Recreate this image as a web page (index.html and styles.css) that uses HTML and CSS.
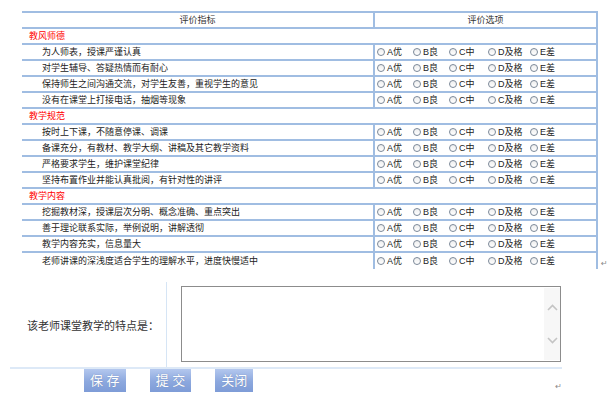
FILE: index.html
```html
<!DOCTYPE html>
<html lang="zh-CN">
<head>
  <meta charset="UTF-8">
  <title>课堂教学评价</title>
  <link rel="stylesheet" href="styles.css">
</head>
<body>
  <div class="grid-wrap">
    <table class="eval">
      <colgroup><col class="c-item"><col class="c-opt"></colgroup>
      <tr class="head"><th>评价指标</th><th class="opt">评价选项</th></tr>

      <tr class="sec"><td colspan="2">教风师德</td></tr>
      <tr><td class="item">为人师表，授课严谨认真</td><td class="opt"><div class="opts"><label><span class="radio"></span>A优</label><label><span class="radio"></span>B良</label><label><span class="radio"></span>C中</label><label><span class="radio"></span>D及格</label><label><span class="radio"></span>E差</label></div></td></tr>
      <tr><td class="item">对学生辅导、答疑热情而有耐心</td><td class="opt"><div class="opts"><label><span class="radio"></span>A优</label><label><span class="radio"></span>B良</label><label><span class="radio"></span>C中</label><label><span class="radio"></span>D及格</label><label><span class="radio"></span>E差</label></div></td></tr>
      <tr><td class="item">保持师生之间沟通交流，对学生友善，重视学生的意见</td><td class="opt"><div class="opts"><label><span class="radio"></span>A优</label><label><span class="radio"></span>B良</label><label><span class="radio"></span>C中</label><label><span class="radio"></span>D及格</label><label><span class="radio"></span>E差</label></div></td></tr>
      <tr><td class="item">没有在课堂上打接电话，抽烟等现象</td><td class="opt"><div class="opts"><label><span class="radio"></span>A优</label><label><span class="radio"></span>B良</label><label><span class="radio"></span>C中</label><label><span class="radio"></span>C及格</label><label><span class="radio"></span>E差</label></div></td></tr>

      <tr class="sec"><td colspan="2">教学规范</td></tr>
      <tr><td class="item">按时上下课，不随意停课、调课</td><td class="opt"><div class="opts"><label><span class="radio"></span>A优</label><label><span class="radio"></span>B良</label><label><span class="radio"></span>C中</label><label><span class="radio"></span>D及格</label><label><span class="radio"></span>E差</label></div></td></tr>
      <tr><td class="item">备课充分，有教材、教学大纲、讲稿及其它教学资料</td><td class="opt"><div class="opts"><label><span class="radio"></span>A优</label><label><span class="radio"></span>B良</label><label><span class="radio"></span>C中</label><label><span class="radio"></span>D及格</label><label><span class="radio"></span>E差</label></div></td></tr>
      <tr><td class="item">严格要求学生，维护课堂纪律</td><td class="opt"><div class="opts"><label><span class="radio"></span>A优</label><label><span class="radio"></span>B良</label><label><span class="radio"></span>C中</label><label><span class="radio"></span>D及格</label><label><span class="radio"></span>E差</label></div></td></tr>
      <tr><td class="item">坚持布置作业并能认真批阅，有针对性的讲评</td><td class="opt"><div class="opts"><label><span class="radio"></span>A优</label><label><span class="radio"></span>B良</label><label><span class="radio"></span>C中</label><label><span class="radio"></span>D及格</label><label><span class="radio"></span>E差</label></div></td></tr>

      <tr class="sec"><td colspan="2">教学内容</td></tr>
      <tr><td class="item">挖掘教材深，授课层次分明、概念准确、重点突出</td><td class="opt"><div class="opts"><label><span class="radio"></span>A优</label><label><span class="radio"></span>B良</label><label><span class="radio"></span>C中</label><label><span class="radio"></span>D及格</label><label><span class="radio"></span>E差</label></div></td></tr>
      <tr><td class="item">善于理论联系实际，举例说明，讲解透彻</td><td class="opt"><div class="opts"><label><span class="radio"></span>A优</label><label><span class="radio"></span>B良</label><label><span class="radio"></span>C中</label><label><span class="radio"></span>D及格</label><label><span class="radio"></span>E差</label></div></td></tr>
      <tr><td class="item">教学内容充实，信息量大</td><td class="opt"><div class="opts"><label><span class="radio"></span>A优</label><label><span class="radio"></span>B良</label><label><span class="radio"></span>C中</label><label><span class="radio"></span>D及格</label><label><span class="radio"></span>E差</label></div></td></tr>
      <tr class="last"><td class="item">老师讲课的深浅度适合学生的理解水平，进度快慢适中</td><td class="opt"><div class="opts"><label><span class="radio"></span>A优</label><label><span class="radio"></span>B良</label><label><span class="radio"></span>C中</label><label><span class="radio"></span>D及格</label><label><span class="radio"></span>E差</label></div></td></tr>
    </table>
    <span class="mark">↵</span>
  </div>

  <!-- 评语 -->
  <div class="remark">
    <div class="remark-label">该老师课堂教学的特点是：</div>
    <div class="remark-field">
      <div class="textbox">
        <div class="textbox-body"></div>
        <div class="scroll">
          <svg width="11" height="7" viewBox="0 0 11 7"><path d="M1 6 L5.5 1.5 L10 6" fill="none" stroke="#c4c4c4" stroke-width="1.6"/></svg>
          <svg width="11" height="7" viewBox="0 0 11 7"><path d="M1 1 L5.5 5.5 L10 1" fill="none" stroke="#c4c4c4" stroke-width="1.6"/></svg>
        </div>
      </div>
    </div>
  </div>

  <div class="actions">
    <button class="btn">保 存</button>
    <button class="btn">提 交</button>
    <button class="btn">关闭</button>
    <span class="mark end">↵</span>
  </div>
</body>
</html>
```

FILE: styles.css
```css
* { box-sizing: border-box; }
body {
  margin: 0;
  font-family: "Liberation Sans", "Noto Sans CJK SC", sans-serif;
  color: #222;
  background: #fff;
}
.grid-wrap {
  display: flex;
  align-items: flex-end;
  margin: 11px 0 0 22px;
}
.eval {
  border-collapse: separate;
  border-spacing: 0;
  table-layout: fixed;
  width: 576px;
  font-size: 9px;
}
.c-item { width: 351px; }
.eval th,
.eval td {
  padding: 0;
  line-height: 14px;
  font-weight: normal;
  border-top: 2px solid #a0bde2;
  white-space: nowrap;
  text-align: left;
}
.eval th { text-align: center; color: #333; }
.eval .opt {
  border-left: 2px solid #a0bde2;
  border-right: 2px solid #a0bde2;
  padding-left: 2px;
}
.eval th.opt { padding-left: 0; }
.eval .sec td {
  color: #f00;
  padding-left: 7px;
  border-right: 2px solid #a0bde2;
}
.eval .item { padding-left: 20px; }
.eval .last td { line-height: 16px; }
.opts {
  display: grid;
  grid-template-columns: 36px 36px 39px 42px auto;
}
.opts label {
  display: flex;
  align-items: center;
}
.radio {
  width: 8px;
  height: 8px;
  margin-right: 2px;
  border: 1px solid #7b8898;
  border-radius: 50%;
  background: linear-gradient(#eeeeee, #fff);
}
.mark {
  color: #8a8a8a;
  font-family: "DejaVu Sans", sans-serif;
  font-size: 8px;
  margin-left: 3px;
  line-height: 10px;
}

.remark {
  display: flex;
  width: 552px;
  height: 87px;
  margin: 13px 0 0 10px;
  border-bottom: 2px solid #dde9f7;
}
.remark-label {
  width: 157px;
  border-right: 1px solid #d6e5f5;
  display: flex;
  align-items: center;
  justify-content: flex-end;
  padding: 0 7px 0 0;
  font-family: "Liberation Sans", "Noto Sans CJK TC", sans-serif;
  font-size: 11px;
  color: #333;
}
.remark-field { padding: 4px 0 0 14px; }
.textbox {
  display: flex;
  width: 380px;
  height: 76px;
  border: 1px solid #8c8c8c;
  background: #fff;
}
.textbox-body { flex: 1; }
.scroll {
  width: 16px;
  margin: 1px 0;
  background: #f7f7f7;
  display: flex;
  flex-direction: column;
  align-items: center;
  justify-content: center;
  gap: 26px;
}

.actions {
  display: flex;
  align-items: flex-start;
  width: 562px;
  padding-left: 84px;
  gap: 24px;
}
.btn {
  height: 23px;
  padding: 0 6px;
  border: none;
  background: linear-gradient(#b3c7ee, #8ca8de 55%, #7e9cd7);
  color: #fff;
  font-family: "Liberation Sans", "Noto Sans CJK SC", sans-serif;
  font-size: 13px;
  line-height: 23px;
  text-shadow: 0 0 1px #6a7fa8;
  cursor: pointer;
}
.mark.end {
  margin-left: auto;
  margin-top: 13px;
}
```
